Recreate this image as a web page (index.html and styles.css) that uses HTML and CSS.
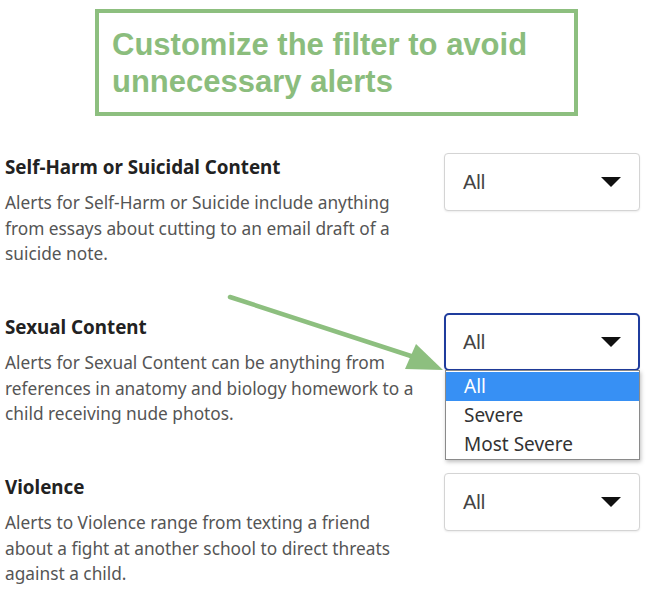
FILE: index.html
```html
<!DOCTYPE html>
<html lang="en">
<head>
<meta charset="utf-8">
<title>Alert filters</title>
<link rel="stylesheet" href="styles.css">
</head>
<body>
<div class="page">
  <div class="callout">Customize the filter to avoid unnecessary alerts</div>

  <div class="settings">
    <div class="row">
      <div class="info">
        <div class="title">Self-Harm or Suicidal Content</div>
        <p class="desc">Alerts for Self-Harm or Suicide include anything from essays about cutting to an email draft of a suicide note.</p>
      </div>
      <div class="select-wrap">
        <div class="select"><span class="value">All</span><span class="caret"></span></div>
      </div>
    </div>

    <div class="row">
      <div class="info">
        <div class="title">Sexual Content</div>
        <p class="desc">Alerts for Sexual Content can be anything from references in anatomy and biology homework to a child receiving nude photos.</p>
      </div>
      <div class="select-wrap">
        <div class="select select-open"><span class="value">All</span><span class="caret"></span></div>
        <ul class="menu">
          <li class="option option-active">All</li>
          <li class="option">Severe</li>
          <li class="option">Most Severe</li>
        </ul>
      </div>
    </div>

    <div class="row">
      <div class="info">
        <div class="title">Violence</div>
        <p class="desc">Alerts to Violence range from texting a friend about a fight at another school to direct threats against a child.</p>
      </div>
      <div class="select-wrap">
        <div class="select"><span class="value">All</span><span class="caret"></span></div>
      </div>
    </div>
  </div>

  <svg class="arrow" width="650" height="602" viewBox="0 0 650 602" aria-hidden="true">
    <line x1="230" y1="297" x2="414" y2="357" stroke="#8dbf7f" stroke-width="4.5" stroke-linecap="round"/>
    <polygon points="416,344 405,369 443,370" fill="#8dbf7f"/>
  </svg>
</div>
</body>
</html>
```

FILE: styles.css
```css
html, body {
  margin: 0;
  padding: 0;
  background: #ffffff;
}

.page {
  position: relative;
  width: 650px;
  height: 602px;
  overflow: hidden;
}

.callout {
  box-sizing: border-box;
  margin: 9px 0 0 95px;
  width: 483px;
  height: 107px;
  border: 4px solid #8dbf7f;
  padding: 13px 8px 0 13px;
  font-family: "Liberation Sans", Arial, sans-serif;
  font-weight: bold;
  font-size: 31px;
  line-height: 37px;
  color: #8bbd7d;
}

.settings {
  margin-top: 37px;
  padding-left: 5px;
}

.row {
  display: flex;
  height: 160px;
}

.info {
  width: 414px;
}

.title {
  padding-top: 3px;
  font-family: "Noto Sans", sans-serif;
  font-weight: bold;
  font-size: 18.8px;
  line-height: 22px;
  color: #222222;
}

.desc {
  margin: 12px 0 0;
  font-family: "Noto Sans", sans-serif;
  font-size: 17.3px;
  line-height: 25.5px;
  color: #555555;
}

.select-wrap {
  position: relative;
  margin-left: auto;
  margin-right: 10px;
  width: 196px;
}

.select {
  box-sizing: border-box;
  height: 58px;
  display: flex;
  align-items: center;
  justify-content: space-between;
  padding: 0 18px 0 18px;
  border: 1px solid #d4d4d4;
  border-radius: 4px;
  box-shadow: 0 1px 2px rgba(0, 0, 0, 0.08);
  background: #fff;
}

.select-open {
  border: 2px solid #1f3c9d;
  border-radius: 5px;
  padding: 0 17px;
  height: 58px;
}

.value {
  font-family: "Liberation Sans", Arial, sans-serif;
  font-size: 20px;
  color: #444444;
}

.caret {
  width: 0;
  height: 0;
  border-left: 10px solid transparent;
  border-right: 10px solid transparent;
  border-top: 10px solid #111111;
}

.menu {
  position: absolute;
  left: 1px;
  top: 57px;
  width: 195px;
  box-sizing: border-box;
  margin: 0;
  padding: 1px 0 0;
  list-style: none;
  background: #fff;
  border: 1px solid #8a8a8a;
  box-shadow: 1px 2px 4px rgba(0, 0, 0, 0.25);
}

.option {
  height: 29px;
  line-height: 29px;
  padding-left: 18px;
  font-family: "Noto Sans", sans-serif;
  font-size: 19px;
  color: #333333;
}

.option-active {
  background: #3790f4;
  color: #ffffff;
}

.arrow {
  position: absolute;
  left: 0;
  top: 0;
  pointer-events: none;
}
```
